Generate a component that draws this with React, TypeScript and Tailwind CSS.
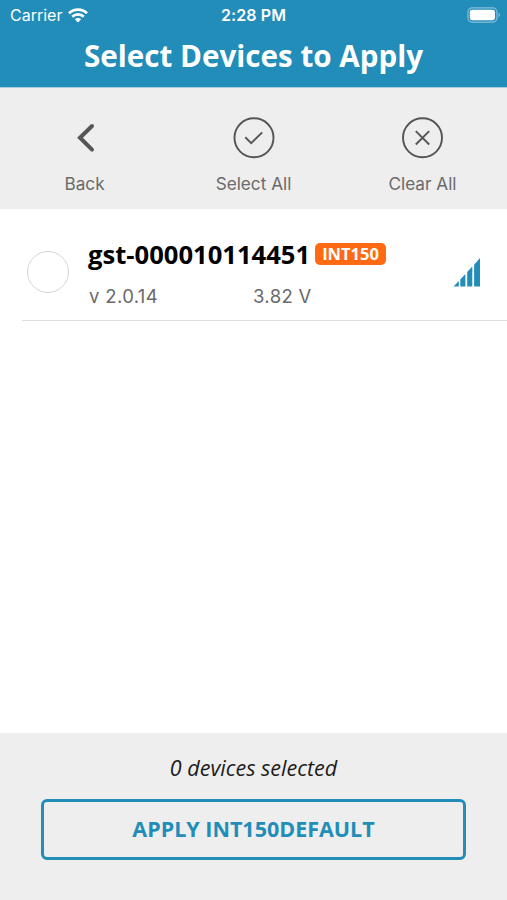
import React from "react";

interface Device {
  id: string;
  profile: string;
  version: string;
  voltage: string;
}

const devices: Device[] = [
  { id: "gst-000010114451", profile: "INT150", version: "v 2.0.14", voltage: "3.82 V" },
];

const WifiIcon = () => (
  <svg width="20" height="15" viewBox="0 0 20 15" fill="none" stroke="white" strokeWidth="2.8">
    <path d="M1 5.2C6 .5 14 .5 19 5.2" />
    <path d="M4.2 8.7C7.5 5.6 12.5 5.6 15.8 8.7" />
    <path d="M10 14.6L6.8 11.3C8.6 9.6 11.4 9.6 13.2 11.3Z" fill="white" stroke="none" />
  </svg>
);

const BatteryIcon = () => (
  <svg width="34" height="16" viewBox="0 0 34 16" fill="none">
    <rect x="1" y="0.9" width="29" height="14.2" rx="4.2" stroke="white" strokeOpacity="0.45" strokeWidth="1.2" />
    <rect x="2.8" y="2.8" width="25.2" height="10.4" rx="2.4" fill="white" />
    <path d="M31.6 5.8C33.2 6.4 33.2 9.6 31.6 10.2Z" fill="white" fillOpacity="0.5" />
  </svg>
);

const BackIcon = () => (
  <svg width="42" height="42" viewBox="0 0 42 42" fill="none" stroke="#555" strokeWidth="4" strokeLinecap="round">
    <path d="M28 9L16 20.8L28 32.6" />
  </svg>
);

const CheckIcon = () => (
  <svg width="42" height="42" viewBox="0 0 42 42" fill="none" stroke="#555" strokeWidth="1.9">
    <circle cx="21" cy="20.8" r="19.5" />
    <path d="M12.3 20.3L18.2 26.1L29.2 15.4" />
  </svg>
);

const ClearIcon = () => (
  <svg width="42" height="42" viewBox="0 0 42 42" fill="none" stroke="#555" strokeWidth="1.9">
    <circle cx="20.5" cy="20.8" r="19.5" />
    <path d="M13.8 14.1L27.2 27.5M27.2 14.1L13.8 27.5" />
  </svg>
);

const SignalIcon = () => (
  <svg width="28" height="30" viewBox="0 0 28 30" fill="#218db8">
    <path d="M0.5 29.4L5.8 24V29.4Z" />
    <path d="M7.3 22.5L12.4 17.1V29.4H7.3Z" />
    <path d="M14.2 15.1L19.3 9.6V29.4H14.2Z" />
    <path d="M21.1 7.7L27 1V29.4H21.1Z" />
  </svg>
);

const ToolbarItem = ({ icon, label }: { icon: React.ReactNode; label: string }) => (
  <button className="flex flex-1 flex-col items-center pt-[29px]">
    {icon}
    <span className="mt-[13px] text-[17.2px] leading-6 text-[#6a6a6a]">{label}</span>
  </button>
);

const DeviceRow = ({ device }: { device: Device }) => (
  <div className="ml-[22px] flex h-[112px] border-b border-[#dedede]">
    <div className="ml-[5px] mt-[42px] h-[42px] w-[42px] shrink-0 rounded-full border border-[#d4d4d4]" />
    <div className="ml-[19px] flex-1 pt-[27px]">
      <div className="flex items-center font-['Open_Sans'] font-bold">
        <span className="w-[227px] whitespace-nowrap pt-[2px] text-[25.6px] leading-[34px] text-black">{device.id}</span>
        <span className="flex h-[22px] w-[71px] items-center justify-center rounded-[5px] bg-[#ff6a13] text-[16.5px] leading-none text-white">
          {device.profile}
        </span>
      </div>
      <div className="mt-[12px] flex pl-px text-[18.5px] leading-6 tracking-[0.35px] text-[#6a6a6a]">
        <span className="w-[164px]">{device.version}</span>
        <span>{device.voltage}</span>
      </div>
    </div>
    <div className="mr-[26px] mt-[48px]">
      <SignalIcon />
    </div>
  </div>
);

const App = () => {
  return (
    <div className="flex h-[900px] w-[507px] flex-col overflow-hidden bg-white font-['Inter',sans-serif]">
      <header className="h-[88px] shrink-0 border-b border-[#a9cede] bg-[#218db8] text-white">
        <div className="grid h-[30px] grid-cols-3 items-center text-[16px]">
          <div className="flex items-center gap-[6px] pl-[10px]">
            <span>Carrier</span>
            <WifiIcon />
          </div>
          <span className="text-center text-[16px] font-semibold tracking-[0.1px]">2:28 PM</span>
          <div className="flex justify-end pr-[6px]">
            <BatteryIcon />
          </div>
        </div>
        <h1 className="mt-[6px] text-center font-['Open_Sans'] text-[29.6px] font-bold leading-10">
          Select Devices to Apply
        </h1>
      </header>

      <nav className="flex h-[121px] shrink-0 bg-[#eeeeee]">
        <ToolbarItem icon={<BackIcon />} label="Back" />
        <ToolbarItem icon={<CheckIcon />} label="Select All" />
        <ToolbarItem icon={<ClearIcon />} label="Clear All" />
      </nav>

      <main className="flex-1">
        {devices.map((device) => (
          <DeviceRow key={device.id} device={device} />
        ))}
      </main>

      <footer className="h-[167px] shrink-0 bg-[#eeeeee] px-[41px] pt-[19px] font-['Open_Sans']">
        <p className="text-center text-[21.5px] italic leading-8 text-[#1c1c1c]">0 devices selected</p>
        <button className="mt-[15px] flex h-[61px] w-full items-center justify-center rounded-[6px] border-[3px] border-[#218db8] text-[21.5px] font-bold text-[#218db8]">
          APPLY INT150DEFAULT
        </button>
      </footer>
    </div>
  );
};

export default App;
